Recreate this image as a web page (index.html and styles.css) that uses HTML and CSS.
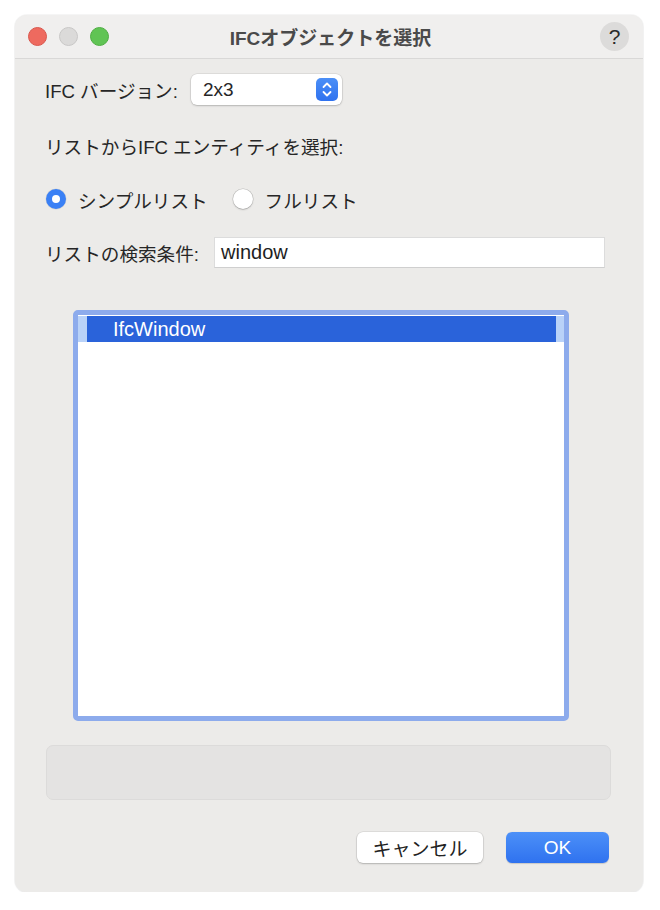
FILE: index.html
```html
<!DOCTYPE html>
<html lang="ja">
<head>
    <meta charset="UTF-8">
    <title>IFCオブジェクトを選択</title>
    <link rel="stylesheet" href="styles.css">
</head>
<body>
    <div class="Window">
        <div class="Titlebar">
            <div class="Lights">
                <span class="Light Red"></span>
                <span class="Light Gray"></span>
                <span class="Light Green"></span>
            </div>
            <div class="Title">IFCオブジェクトを選択</div>
            <div class="HelpBtn">?</div>
        </div>
        <div class="Content">
            <div class="VersionRow">
                <label>IFC バージョン:</label>
                <div class="Popup">
                    <span>2x3</span>
                    <span class="Stepper">
                        <svg width="12" height="17" viewBox="0 0 12 17">
                            <path d="M2.5 6 L6 2.5 L9.5 6" fill="none" stroke="#fff" stroke-width="1.8" stroke-linecap="round" stroke-linejoin="round"/>
                            <path d="M2.5 11 L6 14.5 L9.5 11" fill="none" stroke="#fff" stroke-width="1.8" stroke-linecap="round" stroke-linejoin="round"/>
                        </svg>
                    </span>
                </div>
            </div>
            <div class="PickLabel">リストからIFC エンティティを選択:</div>
            <div class="RadioRow">
                <span class="Radio Checked"></span>
                <span class="RadioText">シンプルリスト</span>
                <span class="Radio"></span>
                <span class="RadioText">フルリスト</span>
            </div>
            <div class="SearchRow">
                <label>リストの検索条件:</label>
                <div class="SearchField">window</div>
            </div>
            <div class="EntityList">
                <div class="ListRow Selected">
                    <span class="Cap"></span>
                    <span class="RowText">IfcWindow</span>
                    <span class="Cap"></span>
                </div>
            </div>
            <div class="InfoBox"></div>
            <div class="Buttons">
                <button class="Btn Cancel">キャンセル</button>
                <button class="Btn Ok">OK</button>
            </div>
        </div>
    </div>
</body>
</html>
```

FILE: styles.css
```css
body, html {
    margin: 0;
    background-color: #fff;
    font-family: "Liberation Sans", "Noto Sans CJK JP", sans-serif;
    color: #262626;
}

.Window {
    margin: 15px 0 0 15px;
    width: 628px;
    border-radius: 12px;
    background-color: #ecebe9;
    box-shadow: 0 0 0 1px rgba(0, 0, 0, 0.04), 0 1px 2px rgba(0, 0, 0, 0.05);
    overflow: hidden;
}

.Titlebar {
    height: 43px;
    display: flex;
    align-items: center;
    background-color: #f0efee;
    border-bottom: 1px solid #d9d8d7;
}

.Lights {
    display: flex;
    gap: 12px;
    margin-left: 13px;
}

.Light {
    width: 19px;
    height: 19px;
    border-radius: 50%;
    box-sizing: border-box;
}

.Red { background-color: #ee6a5f; border: 1px solid #d9574d; }
.Gray { background-color: #dbdad9; border: 1px solid #c8c7c6; }
.Green { background-color: #60c454; border: 1px solid #4fae43; }

.Title {
    flex: 1;
    text-align: center;
    font-weight: bold;
    font-size: 19px;
    color: #4a4a4a;
    margin-left: -48px;
}

.HelpBtn {
    width: 29px;
    height: 29px;
    border-radius: 50%;
    background-color: #dcdbda;
    margin-right: 14px;
    text-align: center;
    line-height: 29px;
    font-size: 21px;
    color: #2a2a2a;
}

.Content {
    padding: 15px 32px 29px 30px;
    font-size: 18.6px;
}

.VersionRow {
    display: flex;
    align-items: center;
    height: 31px;
}

.Popup {
    margin-left: 13px;
    width: 151px;
    height: 31px;
    box-sizing: border-box;
    background-color: #fff;
    border-radius: 6px;
    box-shadow: 0 0 0 0.5px rgba(0, 0, 0, 0.12), 0 1px 2px rgba(0, 0, 0, 0.18);
    display: flex;
    align-items: center;
    justify-content: space-between;
    padding: 0 4px 0 12px;
    font-size: 19px;
}

.Stepper {
    width: 22px;
    height: 23px;
    border-radius: 5px;
    background: linear-gradient(#4b8ff7, #2f72ef);
    display: flex;
    align-items: center;
    justify-content: center;
}

.PickLabel {
    margin-top: 31px;
    height: 24px;
    line-height: 24px;
}

.RadioRow {
    margin-top: 27px;
    height: 24px;
    display: flex;
    align-items: center;
}

.Radio {
    width: 20px;
    height: 20px;
    border-radius: 50%;
    box-sizing: border-box;
    background-color: #fff;
    box-shadow: 0 0 0 0.5px rgba(0, 0, 0, 0.2), 0 1px 2px rgba(0, 0, 0, 0.15);
    margin-left: 1px;
}

.Radio.Checked {
    background: #fff;
    border: 6px solid #3a80f5;
    box-shadow: 0 0 0 0.5px rgba(0, 0, 0, 0.1);
}

.RadioText {
    margin-left: 12px;
    margin-right: 24px;
}

.SearchRow {
    margin-top: 26px;
    display: flex;
    align-items: center;
    height: 31px;
}

.SearchField {
    margin-left: auto;
    margin-right: 6px;
    width: 391px;
    height: 31px;
    box-sizing: border-box;
    background-color: #fff;
    border: 1px solid #dcdcdc;
    border-bottom-color: #cfcfcf;
    padding: 0 6px;
    line-height: 29px;
    font-size: 20px;
    color: #1e1e1e;
}

.EntityList {
    margin: 42px 0 0 28px;
    width: 496px;
    height: 411px;
    box-sizing: border-box;
    border: 5px solid #8dabec;
    border-radius: 5px;
    background-color: #fff;
    padding-top: 1px;
}

.ListRow {
    display: flex;
    height: 26px;
    align-items: center;
}

.Selected {
    background-color: #2a63da;
}

.Cap {
    width: 9px;
    height: 100%;
    background-color: #b9d2f8;
}

.Cap:last-child {
    width: 8px;
    margin-left: auto;
}

.RowText {
    color: #fff;
    font-size: 20px;
    margin-left: 26px;
}

.InfoBox {
    margin: 24px 0 0 1px;
    height: 55px;
    box-sizing: border-box;
    border: 1px solid #dcdbda;
    border-radius: 7px;
    background-color: #e4e3e2;
}

.Buttons {
    margin-top: 32px;
    display: flex;
    justify-content: flex-end;
    gap: 23px;
    padding-right: 2px;
}

.Btn {
    height: 31px;
    border: none;
    border-radius: 6px;
    font-family: "Liberation Sans", "Noto Sans CJK JP", sans-serif;
    font-size: 19px;
    padding: 0;
}

.Cancel {
    width: 126px;
    background-color: #fff;
    color: #222;
    box-shadow: 0 0 0 0.5px rgba(0, 0, 0, 0.12), 0 1px 2px rgba(0, 0, 0, 0.2);
}

.Ok {
    width: 103px;
    background: linear-gradient(#4c90f8, #2f72ef);
    color: #fff;
    box-shadow: 0 0.5px 1px rgba(0, 0, 0, 0.15);
}
```
